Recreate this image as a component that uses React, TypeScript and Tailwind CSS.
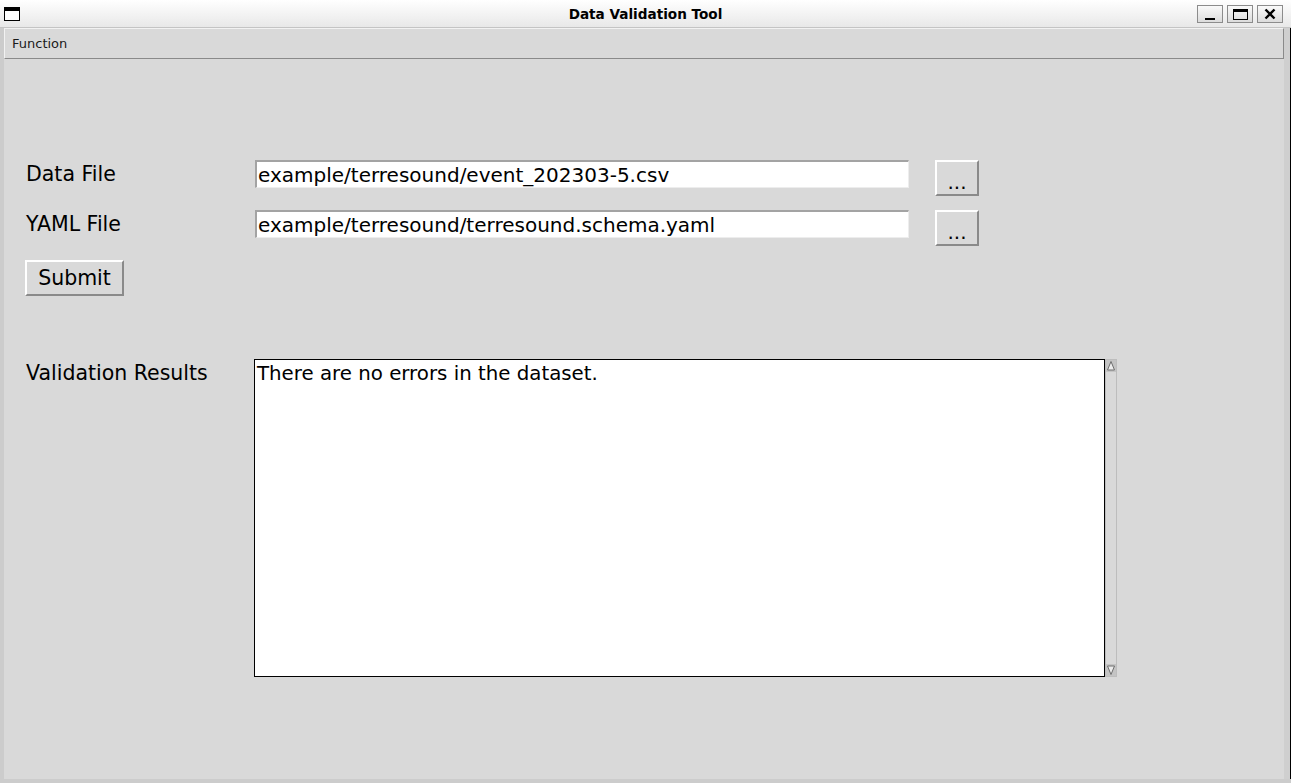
import React from "react";

const font = { fontFamily: '"DejaVu Sans", "Liberation Sans", sans-serif' };

function TitleButton({ children }: { children: React.ReactNode }) {
  return (
    <div className="w-[26px] h-[18px] border border-[#8c8c8c] bg-gradient-to-b from-[#fafafa] to-[#dcdcdc] flex items-center justify-center">
      {children}
    </div>
  );
}

function Entry({ value }: { value: string }) {
  return (
    <div className="w-[654px] h-[28px] bg-white border-t-2 border-l-2 border-t-[#a3a3a3] border-l-[#a3a3a3] border-r border-b border-r-[#ededed] border-b-[#ededed] pl-[1px] pt-[1px] text-[20px] leading-[24px] text-black whitespace-nowrap overflow-hidden">
      {value}
    </div>
  );
}

function DotsButton() {
  return (
    <div className="w-[44px] h-[36px] ml-[26px] bg-[#d9d9d9] border-t-2 border-l-2 border-t-white border-l-white border-r-2 border-b-2 border-r-[#8a8a8a] border-b-[#8a8a8a] flex items-center justify-center text-[20px] leading-[24px] pt-[7px] text-black">
      ...
    </div>
  );
}

export default function App() {
  return (
    <div className="w-[1291px] h-[783px] flex flex-col bg-[#cccccc] overflow-hidden" style={font}>
      {/* Title bar */}
      <div className="h-[28px] shrink-0 relative bg-gradient-to-b from-white to-[#e8e8e8] border-b border-b-[#c4c4c4] flex items-center">
        <div className="ml-[4px] w-[16px] h-[14px] border border-black border-t-[4px] bg-white" />
        <div className="absolute left-0 right-0 top-[6px] text-center text-[13.6px] font-bold leading-[16px] text-black">
          Data Validation Tool
        </div>
        <div className="ml-auto mr-[8px] flex gap-[4px] mt-[1px]">
          <TitleButton>
            <div className="w-[10px] h-[2px] bg-black mt-[9px]" />
          </TitleButton>
          <TitleButton>
            <div className="w-[15px] h-[11px] border border-black border-t-[3px]" />
          </TitleButton>
          <TitleButton>
            <svg width="12" height="12" viewBox="0 0 12 12">
              <path d="M1.5 1.5 L10.5 10.5 M10.5 1.5 L1.5 10.5" stroke="black" strokeWidth="2.4" />
            </svg>
          </TitleButton>
        </div>
      </div>

      {/* Body */}
      <div className="flex flex-1 min-h-0">
        <div className="w-[4px] bg-[#cccccc] shrink-0" />
        <div className="flex-1 bg-[#d9d9d9] flex flex-col">
          {/* Menu bar */}
          <div className="h-[31px] border-t border-l border-t-[#f2f2f2] border-l-[#f2f2f2] border-b border-r border-b-[#8a8a8a] border-r-[#8a8a8a] bg-[#d9d9d9] flex items-center pl-[7px] text-[13px] text-[#1a1a1a]">
            Function
          </div>

          <div className="pl-[22px] flex flex-col">
            {/* Data File row */}
            <div className="flex items-start mt-[101px]">
              <div className="w-[229px] text-[20.5px] leading-[24px] mt-[2px] text-black">Data File</div>
              <Entry value="example/terresound/event_202303-5.csv" />
              <DotsButton />
            </div>
            {/* YAML File row */}
            <div className="flex items-start mt-[14px]">
              <div className="w-[229px] text-[20.5px] leading-[24px] mt-[2px] text-black">YAML File</div>
              <Entry value="example/terresound/terresound.schema.yaml" />
              <DotsButton />
            </div>
            {/* Submit */}
            <div className="mt-[14px] -ml-[1px]">
              <div className="w-[99px] h-[36px] bg-[#d9d9d9] border-t-2 border-l-2 border-t-white border-l-white border-r-2 border-b-2 border-r-[#8a8a8a] border-b-[#8a8a8a] flex items-center justify-center text-[20.5px] leading-[24px] text-black">
                Submit
              </div>
            </div>
            {/* Validation results */}
            <div className="flex items-start mt-[63px]">
              <div className="w-[228px] text-[20.5px] leading-[24px] mt-[2px] text-black">Validation Results</div>
              <div className="w-[851px] h-[318px] bg-white border border-black px-[2px] pt-[2px] text-[19.8px] leading-[24px] text-black">
                There are no errors in the dataset.
              </div>
              <div className="w-[12px] h-[318px] bg-[#d9d9d9] border border-[#bdbdbd] flex flex-col items-center justify-between">
                <svg width="10" height="12" viewBox="0 0 10 12">
                  <rect x="0" y="0" width="10" height="12" fill="#c4c4c4" />
                  <path d="M5 1.5 L8.5 10 L1.5 10 Z" fill="#ececec" stroke="#6e6e6e" strokeWidth="1" />
                </svg>
                <svg width="10" height="12" viewBox="0 0 10 12">
                  <rect x="0" y="0" width="10" height="12" fill="#c4c4c4" />
                  <path d="M5 10.5 L8.5 2 L1.5 2 Z" fill="#ececec" stroke="#6e6e6e" strokeWidth="1" />
                </svg>
              </div>
            </div>
          </div>
        </div>
        <div className="w-[6px] bg-[#cfcfcf] shrink-0" />
        <div className="w-[1px] bg-black shrink-0" />
      </div>
      <div className="h-[4px] bg-[#cccccc] shrink-0" />
    </div>
  );
}
